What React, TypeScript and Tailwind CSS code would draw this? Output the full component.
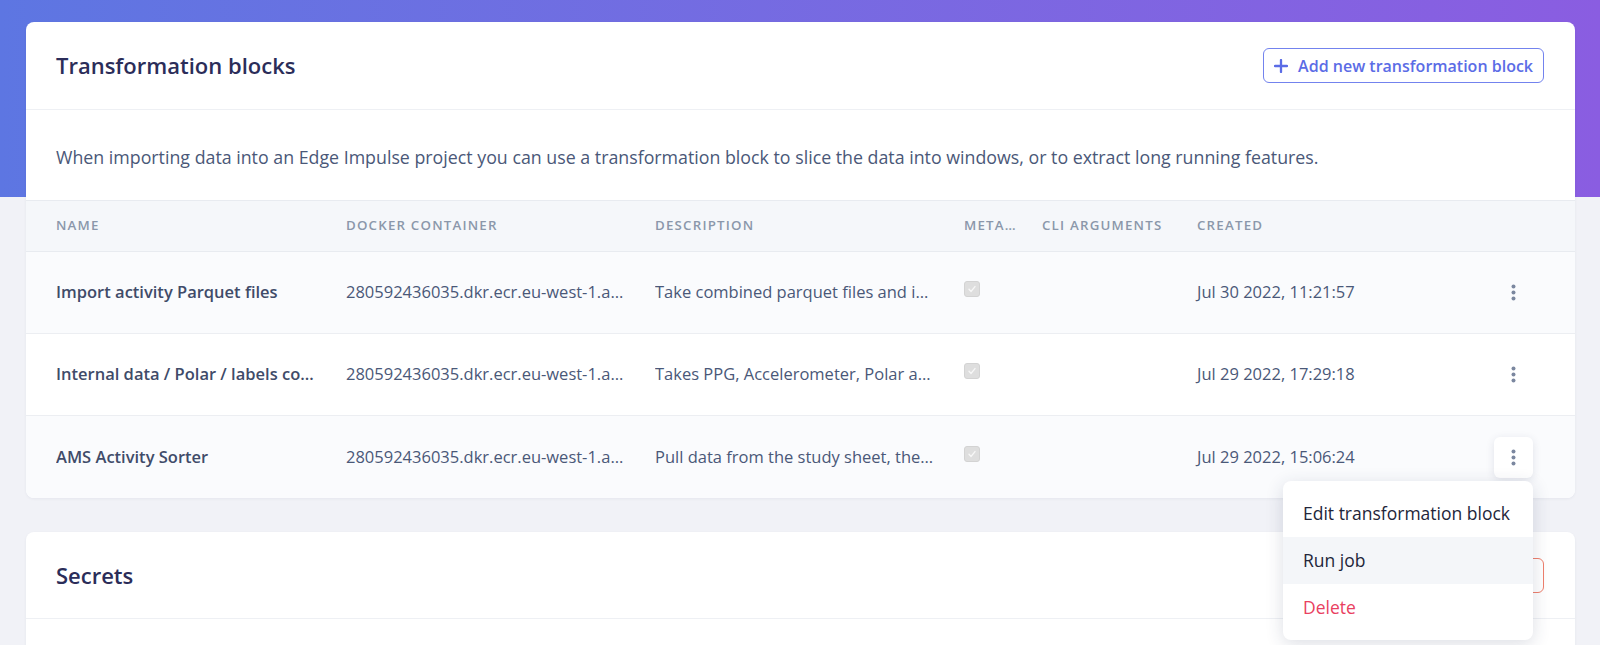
import React from "react";

const font = { fontFamily: '"Open Sans", "Liberation Sans", sans-serif' };

type Block = {
  name: string;
  container: string;
  description: string;
  created: string;
};

const blocks: Block[] = [
  {
    name: "Import activity Parquet files",
    container: "280592436035.dkr.ecr.eu-west-1.amazonaws.com/import-activity-parquet:latest",
    description: "Take combined parquet files and import them into the project as activity windows",
    created: "Jul 30 2022, 11:21:57",
  },
  {
    name: "Internal data / Polar / labels combiner",
    container: "280592436035.dkr.ecr.eu-west-1.amazonaws.com/polar-labels-combiner:latest",
    description: "Takes PPG, Accelerometer, Polar and label data and combines them into one file",
    created: "Jul 29 2022, 17:29:18",
  },
  {
    name: "AMS Activity Sorter",
    container: "280592436035.dkr.ecr.eu-west-1.amazonaws.com/ams-activity-sorter:latest",
    description: "Pull data from the study sheet, then sort activities per participant",
    created: "Jul 29 2022, 15:06:24",
  },
];

const cols = "grid grid-cols-[290px_309px_309px_78px_155px_1fr_39px] pl-[30px] pr-[42px]";

function Kebab() {
  return (
    <svg width="5" height="17" viewBox="0 0 5 17" fill="#7b879f">
      <circle cx="2.5" cy="2.5" r="2" />
      <circle cx="2.5" cy="8.5" r="2" />
      <circle cx="2.5" cy="14.5" r="2" />
    </svg>
  );
}

function DisabledCheck() {
  return (
    <div className="flex h-[16px] w-[16px] items-center justify-center rounded-[3px] border border-[#d3d3d3] bg-[#dedede]">
      <svg width="10" height="10" viewBox="0 0 10 10" fill="none">
        <path d="M2 5.3 L4.1 7.4 L8 2.6" stroke="#f7f7f7" strokeWidth="1.4" strokeLinecap="round" strokeLinejoin="round" />
      </svg>
    </div>
  );
}

function Menu() {
  return (
    <div className="absolute right-0 top-[calc(100%+3px)] z-20 w-[250px] rounded-lg bg-white py-[9px] whitespace-nowrap shadow-[0_4px_18px_rgba(40,50,90,0.16)]">
      <div className="flex h-[47px] items-center px-5 text-[17.5px] text-[#23263a]">Edit transformation block</div>
      <div className="flex h-[47px] items-center bg-[#f4f6f9] px-5 text-[17.5px] text-[#23263a]">Run job</div>
      <div className="flex h-[47px] items-center px-5 text-[17.5px] text-[#e9405f]">Delete</div>
    </div>
  );
}

export default function App() {
  return (
    <div style={font} className="min-h-[645px] overflow-hidden bg-[#f1f2f7]">
      <div className="h-[197px] bg-gradient-to-r from-[#5d76e2] to-[#8a5de1]" />
      <div className="-mt-[175px] flex flex-col gap-[34px] pl-[26px] pr-[25px]">
        <div className="rounded-lg bg-white shadow-[0_1px_3px_rgba(40,50,90,0.06)]">
          <div className="flex h-[88px] items-center justify-between border-b border-[#eef0f4] pl-[30px] pr-[31px]">
            <h2 className="text-[22px] font-semibold text-[#2b2d59]">Transformation blocks</h2>
            <button className="flex h-[35px] items-center gap-[10px] rounded-md border border-[#7383ee] px-[10px] text-[16px] font-semibold text-[#5b6ce6]">
              <svg width="14" height="14" viewBox="0 0 14 14" fill="none">
                <path d="M7 1 V13 M1 7 H13" stroke="#5b6ce6" strokeWidth="2.3" strokeLinecap="round" />
              </svg>
              Add new transformation block
            </button>
          </div>
          <div className="flex h-[90px] items-center px-[30px] pt-[5px] text-[17.8px] text-[#4a5878]">
            When importing data into an Edge Impulse project you can use a transformation block to slice the data into windows, or to extract long running features.
          </div>
          <div className={`${cols} h-[52px] items-center border-y border-[#e8ebf0] bg-[#f5f7fa] text-[13.3px] font-semibold uppercase tracking-[0.09em] text-[#8b97aa]`}>
            <div>Name</div>
            <div>Docker container</div>
            <div>Description</div>
            <div className="truncate pr-[22px]">Metadata</div>
            <div>CLI arguments</div>
            <div>Created</div>
            <div />
          </div>
          {blocks.map((b, i) => (
            <div
              key={b.name}
              className={`${cols} h-[82px] items-center text-[16.5px] text-[#4a5878] ${i % 2 === 0 ? "bg-[#fafbfd]" : "bg-white"} ${i < blocks.length - 1 ? "border-b border-[#eceef2]" : "rounded-b-lg"}`}
            >
              <div className="truncate pr-[30px] font-semibold text-[#404b69]">{b.name}</div>
              <div className="truncate pr-[30px]">{b.container}</div>
              <div className="truncate pr-[24px]">{b.description}</div>
              <div className="-mt-[7px]">
                <DisabledCheck />
              </div>
              <div />
              <div>{b.created}</div>
              <div className="relative flex justify-center">
                {i === 2 ? (
                  <>
                    <div className="flex h-[41px] w-[39px] items-center justify-center rounded-md bg-white shadow-[0_2px_8px_rgba(40,50,90,0.12)]">
                      <Kebab />
                    </div>
                    <Menu />
                  </>
                ) : (
                  <div className="flex h-[41px] w-[39px] items-center justify-center">
                    <Kebab />
                  </div>
                )}
              </div>
            </div>
          ))}
        </div>

        <div className="rounded-lg bg-white shadow-[0_1px_3px_rgba(40,50,90,0.06)]">
          <div className="flex h-[87px] items-center justify-between border-b border-[#eef0f4] pl-[30px] pr-[31px]">
            <h2 className="text-[22px] font-semibold text-[#2b2d59]">Secrets</h2>
            <button className="flex h-[35px] items-center gap-[9px] rounded-md border border-[#ef7f6c] px-[10px] text-[16px] font-semibold text-[#ef6a52]">
              Add new secret
            </button>
          </div>
          <div className="h-[80px]" />
        </div>
      </div>
    </div>
  );
}
